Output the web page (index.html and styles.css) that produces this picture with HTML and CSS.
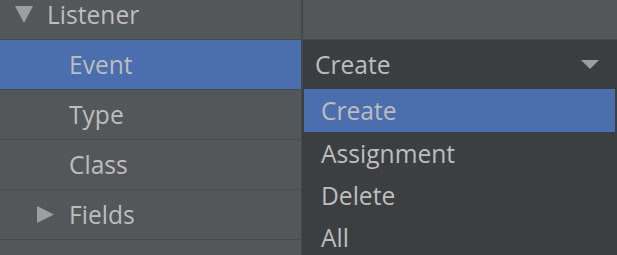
FILE: index.html
```html
<!DOCTYPE html>
<html lang="en">
<head>
    <meta charset="UTF-8">
    <title>Properties</title>
    <link rel="stylesheet" href="styles.css">
</head>
<body>
    <div class="tree">
        <div class="row first">
            <div class="name">
                <span class="toggle">
                    <svg width="18" height="17" viewBox="0 0 18 17"><path d="M0 0H18L9 17Z"/></svg>
                </span>Listener
            </div>
            <div class="value"></div>
        </div>
        <div class="row selected">
            <div class="name child"><span class="toggle"></span>Event</div>
            <div class="value combo">
                <span class="combo-text">Create</span>
                <svg class="combo-arrow" width="18" height="9" viewBox="0 0 18 9"><path d="M0 0H18L9 9Z"/></svg>
            </div>
        </div>
        <div class="row">
            <div class="name child"><span class="toggle"></span>Type</div>
            <div class="value"></div>
        </div>
        <div class="row">
            <div class="name child"><span class="toggle"></span>Class</div>
            <div class="value"></div>
        </div>
        <div class="row">
            <div class="name child">
                <span class="toggle">
                    <svg width="18" height="17" viewBox="0 0 18 17"><path d="M0 0L17 8.5L0 17Z"/></svg>
                </span>Fields
            </div>
            <div class="value"></div>
        </div>
        <div class="row">
            <div class="name top">Dependencies</div>
            <div class="value"></div>
        </div>
    </div>

    <!-- Combo popup -->
    <ul class="popup">
        <li class="active">Create</li>
        <li>Assignment</li>
        <li>Delete</li>
        <li>All</li>
    </ul>
</body>
</html>
```

FILE: styles.css
```css
* {
    margin: 0;
    padding: 0;
    box-sizing: border-box;
}

:root {
    --row-bg: #53575a;
    --row-line: #484b4e;
    --col-line: #45484a;
    --select-bg: #4b6eaf;
    --popup-bg: #3c3f41;
    --text-color: #bdbdbd;
    --icon-color: #9e9e9e;
}

body {
    position: relative;
    overflow: hidden;
    height: 255px;
    background: var(--row-bg);
    color: var(--text-color);
    font-family: 'Open Sans', 'Noto Sans', sans-serif;
    font-size: 24.6px;
}

.tree {
    display: flex;
    flex-direction: column;
}

.row {
    display: flex;
    height: 50px;
    border-bottom: 1px solid var(--row-line);
}

.row.first {
    margin-top: -10px;
}

.name {
    display: flex;
    align-items: center;
    width: 303px;
    padding-left: 15px;
    border-right: 2px solid var(--col-line);
    white-space: nowrap;
}

.name.child {
    padding-left: 37px;
}

.name.top {
    padding-left: 25px;
}

.row.selected .name {
    background: var(--select-bg);
}

.toggle {
    display: flex;
    width: 18px;
    margin-right: 14px;
    fill: var(--icon-color);
}

.value {
    flex: 1;
}

.combo {
    display: flex;
    align-items: center;
    justify-content: space-between;
    padding: 0 18px 0 12px;
    background: #3b3e40;
}

.combo-arrow {
    fill: var(--icon-color);
}

.popup {
    position: absolute;
    top: 89px;
    left: 302px;
    width: 315px;
    height: 166px;
    padding: 0 2px;
    list-style: none;
    background: var(--popup-bg);
}

.popup li {
    height: 42px;
    display: flex;
    align-items: center;
    padding-left: 17px;
}

.popup li.active {
    height: 43px;
    background: var(--select-bg);
}
```
